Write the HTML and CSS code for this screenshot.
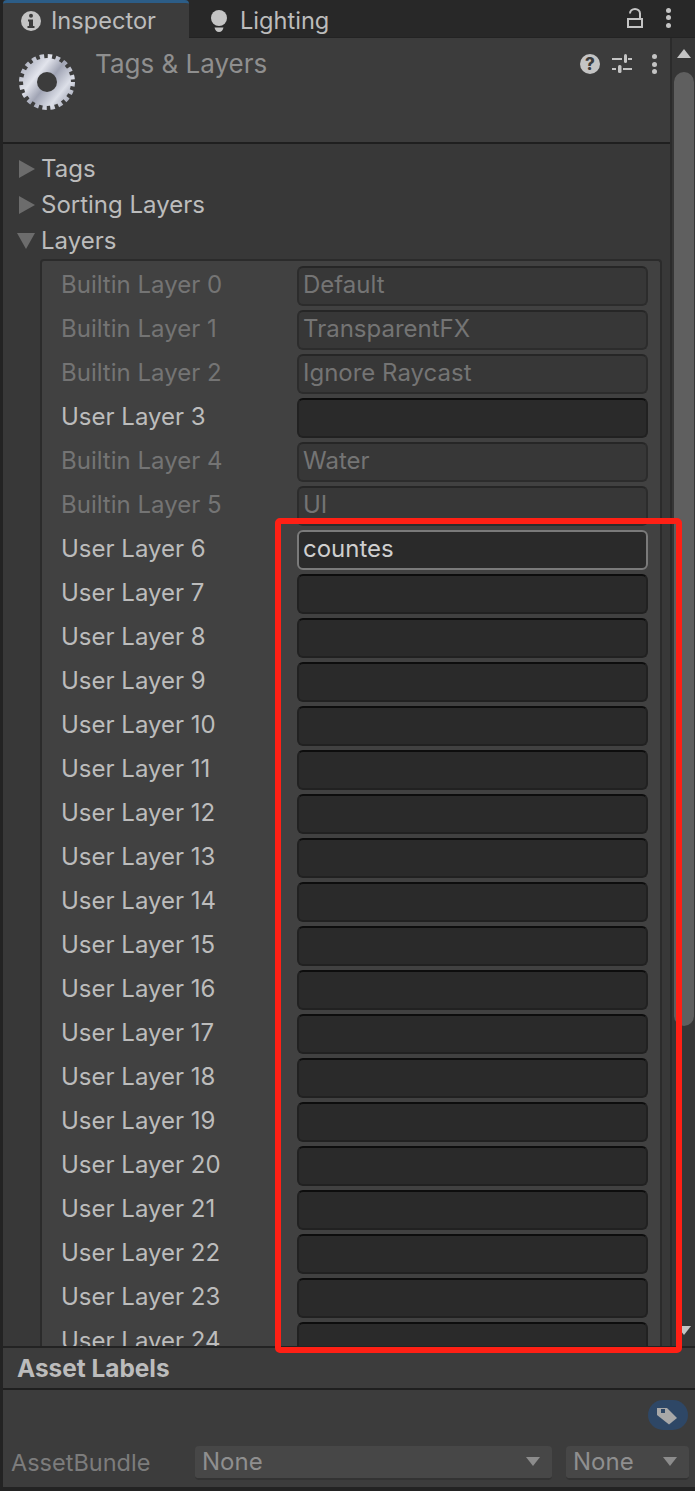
FILE: index.html
```html
<!DOCTYPE html>
<html lang="en">
<head>
    <meta charset="UTF-8">
    <title>Tags &amp; Layers</title>
    <link rel="stylesheet" href="styles.css">
</head>
<body>
    <div class="window">
        <div class="tabbar">
            <div class="tab tab-active">
                <svg class="tab-icon" viewBox="0 0 20 20"><circle cx="10" cy="10" r="10" fill="#c4c4c4"/><circle cx="10" cy="4.800" r="2" fill="#3c3c3c"/><path d="M7 8.500h5V15h1.500v2h-7v-2H8v-4.500H7z" fill="#3c3c3c"/></svg>
                <span>Inspector</span>
            </div>
            <div class="tab tab-second">
                <svg class="bulb" viewBox="0 0 16 22"><circle cx="8" cy="8" r="8" fill="#c4c4c4"/><path d="M3.500 17.500h9C12 20 10.500 22 8 22s-4-2-4.500-4.500z" fill="#c4c4c4"/></svg>
                <span>Lighting</span>
            </div>
            <div class="tabbar-tools">
                <svg class="lock" viewBox="0 0 16 20"><path d="M3 5.500a5 4.500 0 0 1 10 0V11" fill="none" stroke="#c4c4c4" stroke-width="2"/><rect x="1" y="11" width="14" height="8" fill="none" stroke="#c4c4c4" stroke-width="2"/></svg>
                <div class="dots"><i></i><i></i><i></i></div>
            </div>
        </div>

        <div class="body">
            <div class="main">
                <div class="header">
                    <svg class="gear" viewBox="0 0 60 60">
                        <defs>
                            <linearGradient id="steel" x1="0" y1="0.1" x2="1" y2="0.9">
                                <stop offset="0" stop-color="#a4a8b7"/>
                                <stop offset="0.3" stop-color="#e2e4ec"/>
                                <stop offset="0.52" stop-color="#a0a4b4"/>
                                <stop offset="0.78" stop-color="#dcdfe8"/>
                                <stop offset="1" stop-color="#9a9eae"/>
                            </linearGradient>
                        </defs>
                        <circle cx="30" cy="30" r="24" fill="url(#steel)"/>
                        <circle cx="30" cy="30" r="25.500" fill="none" stroke="url(#steel)" stroke-width="5" stroke-dasharray="4.400 3.610"/>
                        <circle cx="30" cy="30" r="10" fill="#3c3c3c"/>
                    </svg>
                    <div class="header-title">Tags &amp; Layers</div>
                    <div class="header-tools">
                        <div class="help">?</div>
                        <svg class="sliders" viewBox="0 0 20 20"><path d="M0 5h10M16 5h4M0 15h4M11 15h9" stroke="#c4c4c4" stroke-width="2"/><rect x="12" y="0" width="3" height="9" rx="1.500" fill="#c4c4c4"/><rect x="6" y="11" width="3.500" height="8" rx="1.500" fill="#c4c4c4"/></svg>
                        <div class="dots dots-header"><i></i><i></i><i></i></div>
                    </div>
                </div>

                <div class="scroll-area">
                    <div class="fold"><span class="arrow arrow-right"></span>Tags</div>
                    <div class="fold"><span class="arrow arrow-right"></span>Sorting Layers</div>
                    <div class="fold"><span class="arrow arrow-down"></span>Layers</div>
                    <div class="layer-box">
                        <div class="row muted"><label>Builtin Layer 0</label><div class="field">Default</div></div>
                        <div class="row muted"><label>Builtin Layer 1</label><div class="field">TransparentFX</div></div>
                        <div class="row muted"><label>Builtin Layer 2</label><div class="field">Ignore Raycast</div></div>
                        <div class="row"><label>User Layer 3</label><div class="field"></div></div>
                        <div class="row muted"><label>Builtin Layer 4</label><div class="field">Water</div></div>
                        <div class="row muted"><label>Builtin Layer 5</label><div class="field">UI</div></div>
                        <div class="row"><label>User Layer 6</label><div class="field field-focus">countes</div></div>
                        <div class="row"><label>User Layer 7</label><div class="field"></div></div>
                        <div class="row"><label>User Layer 8</label><div class="field"></div></div>
                        <div class="row"><label>User Layer 9</label><div class="field"></div></div>
                        <div class="row"><label>User Layer 10</label><div class="field"></div></div>
                        <div class="row"><label>User Layer 11</label><div class="field"></div></div>
                        <div class="row"><label>User Layer 12</label><div class="field"></div></div>
                        <div class="row"><label>User Layer 13</label><div class="field"></div></div>
                        <div class="row"><label>User Layer 14</label><div class="field"></div></div>
                        <div class="row"><label>User Layer 15</label><div class="field"></div></div>
                        <div class="row"><label>User Layer 16</label><div class="field"></div></div>
                        <div class="row"><label>User Layer 17</label><div class="field"></div></div>
                        <div class="row"><label>User Layer 18</label><div class="field"></div></div>
                        <div class="row"><label>User Layer 19</label><div class="field"></div></div>
                        <div class="row"><label>User Layer 20</label><div class="field"></div></div>
                        <div class="row"><label>User Layer 21</label><div class="field"></div></div>
                        <div class="row"><label>User Layer 22</label><div class="field"></div></div>
                        <div class="row"><label>User Layer 23</label><div class="field"></div></div>
                        <div class="row"><label>User Layer 24</label><div class="field"></div></div>
                    </div>
                </div>
            </div>
            <div class="scrollbar">
                <span class="sb-up"></span>
                <div class="sb-thumb"></div>
                <span class="sb-down"></span>
            </div>
        </div>

        <div class="labels-bar">Asset Labels</div>
        <div class="footer">
            <div class="tag-row">
                <div class="tag-pill">
                    <svg viewBox="0 0 22 22"><path d="M1 4h10l10 10-8 6.500L1 11z" fill="#a8a8a8"/><rect x="5" y="5" width="4" height="4" fill="#2e4766"/></svg>
                </div>
            </div>
            <div class="bundle-row">
                <div class="bundle-label">AssetBundle</div>
                <div class="dropdown dropdown-wide">None<span class="caret"></span></div>
                <div class="dropdown dropdown-small">None<span class="caret"></span></div>
            </div>
        </div>

        <div class="annotation"></div>
    </div>
</body>
</html>
```

FILE: styles.css
```css
* {
    box-sizing: border-box;
}
html, body {
    margin: 0;
    padding: 0;
    background: #232323;
}
body {
    font-family: Inter, "Noto Sans", sans-serif;
    font-size: 24px;
    color: #bcbcbc;
}
.window {
    position: relative;
    width: 695px;
    height: 1491px;
    padding: 0 0 4px 3px;
    display: flex;
    flex-direction: column;
    overflow: hidden;
    background: #232323;
}

/* tab strip */
.tabbar {
    height: 38px;
    flex: none;
    display: flex;
    background: #282828;
    border-bottom: 1px solid #232323;
}
.tab {
    width: 186px;
    height: 38px;
    display: flex;
    align-items: center;
    gap: 10px;
    padding-left: 18px;
    font-size: 23.6px;
    border-top: 3px solid transparent;
}
.tab-second {
    width: auto;
    gap: 13px;
    padding-left: 22px;
}
.tab-active {
    background: #3c3c3c;
    border-top-color: #2c5d87;
    border-radius: 4px 4px 0 0;
}
.tab-icon {
    width: 20px;
    height: 20px;
}
.bulb {
    width: 16px;
    height: 22px;
}
.tabbar-tools {
    margin-left: auto;
    display: flex;
    align-items: center;
    gap: 23px;
    padding: 0 24px 2px 0;
}
.lock {
    width: 16px;
    height: 20px;
}
.dots {
    display: flex;
    flex-direction: column;
    gap: 2.500px;
}
.dots i {
    display: block;
    width: 5px;
    height: 5px;
    border-radius: 50%;
    background: #c4c4c4;
}

.body {
    height: 1308px;
    flex: none;
    display: flex;
}
.main {
    flex: 1;
    min-width: 0;
    display: flex;
    flex-direction: column;
}

/* header */
.header {
    height: 106px;
    flex: none;
    display: flex;
    background: #3c3c3c;
    border-bottom: 2px solid #1f1f1f;
}
.gear {
    width: 60px;
    height: 60px;
    margin: 14px 0 0 14px;
    flex: none;
}
.header-title {
    margin: 10px 0 0 18px;
    font-size: 26px;
    line-height: 32px;
    color: #8f8f8f;
}
.header-tools {
    margin-left: auto;
    display: flex;
    align-items: center;
    align-self: flex-start;
    gap: 12px;
    padding: 16px 13px 0 0;
}
.help {
    width: 20px;
    height: 20px;
    border-radius: 50%;
    background: #c4c4c4;
    color: #3c3c3c;
    font-size: 17px;
    font-weight: 800;
    line-height: 20px;
    text-align: center;
}
.sliders {
    width: 20px;
    height: 20px;
}
.dots-header {
    margin-left: 8px;
}

/* scrolled part */
.scroll-area {
    flex: 1;
    min-height: 0;
    overflow: hidden;
    padding-top: 7px;
    background: #383838;
}
.fold {
    height: 36px;
    display: flex;
    align-items: center;
    padding-left: 16px;
    line-height: 36px;
}
.arrow {
    width: 0;
    height: 0;
    margin-right: 6px;
    flex: none;
}
.arrow-right {
    border-left: 16px solid #6c6c6c;
    border-top: 9px solid transparent;
    border-bottom: 9px solid transparent;
}
.arrow-down {
    margin-left: -2px;
    border-top: 16px solid #6c6c6c;
    border-left: 9px solid transparent;
    border-right: 9px solid transparent;
}
.layer-box {
    width: 622px;
    margin-left: 37px;
    padding: 3px 12px 0 19px;
    background: #414141;
    border: 2px solid #2b2b2b;
    border-radius: 4px 4px 0 0;
    border-bottom: 0;
}
.row {
    height: 44px;
    display: flex;
    align-items: center;
    justify-content: space-between;
}
.row label {
    line-height: 30px;
    padding-bottom: 2px;
}
.row.muted label {
    color: #747474;
}
.field {
    width: 351px;
    height: 40px;
    padding: 0 4px;
    line-height: 34px;
    background: #2a2a2a;
    border: 2px solid #212121;
    border-top-color: #0d0d0d;
    border-radius: 6px;
    color: #cfcfcf;
}
.muted .field {
    background: #373737;
    border-color: #2c2c2c;
    border-top-color: #262626;
    color: #747474;
}
.field-focus {
    border-color: #7a7a7a;
    border-top-color: #7a7a7a;
}

.scrollbar {
    width: 25px;
    flex: none;
    position: relative;
    background: #363636;
    border-left: 2px solid #2b2b2b;
}
.sb-thumb {
    position: absolute;
    left: 2px;
    top: 34px;
    width: 20px;
    height: 954px;
    border-radius: 10px;
    background: #5f5f5f;
}
.sb-up, .sb-down {
    position: absolute;
    left: 5px;
    width: 0;
    height: 0;
    border-left: 7px solid transparent;
    border-right: 7px solid transparent;
}
.sb-up {
    top: 11px;
    border-bottom: 9px solid #c4c4c4;
}
.sb-down {
    top: 1288px;
    border-top: 9px solid #c4c4c4;
}

/* bottom */
.labels-bar {
    height: 44px;
    flex: none;
    padding-left: 14px;
    font-size: 24.4px;
    line-height: 40px;
    font-weight: 700;
    background: #3c3c3c;
    border-top: 2px solid #232323;
    border-bottom: 2px solid #1f1f1f;
}
.footer {
    flex: 1;
    background: #3c3c3c;
    padding: 10px 0 0 8px;
}
.tag-row {
    display: flex;
    justify-content: flex-end;
    padding-right: 7px;
}
.tag-pill {
    width: 40px;
    height: 30px;
    padding: 4px 8px;
    border-radius: 15px;
    background: #2e4766;
}
.tag-pill svg {
    display: block;
    width: 22px;
    height: 22px;
}
.bundle-row {
    display: flex;
    align-items: center;
    margin-top: 16px;
}
.bundle-label {
    width: 184px;
    padding-bottom: 2px;
    font-size: 23.500px;
    color: #7c7c7c;
}
.dropdown {
    height: 34px;
    display: flex;
    align-items: center;
    justify-content: space-between;
    padding: 0 12px 2px 7px;
    background: #474747;
    border-radius: 4px;
    border-bottom: 2px solid #333;
    color: #8f8f8f;
}
.dropdown-wide {
    width: 357px;
}
.dropdown-small {
    width: 123px;
    margin-left: 14px;
}
.caret {
    width: 0;
    height: 0;
    border-top: 9px solid #8c8c8c;
    border-left: 7px solid transparent;
    border-right: 7px solid transparent;
}

/* red box drawn on the screenshot */
.annotation {
    position: absolute;
    left: 275px;
    top: 518px;
    width: 407px;
    height: 835px;
    border: 6px solid #ff2015;
    border-radius: 5px;
}
```
